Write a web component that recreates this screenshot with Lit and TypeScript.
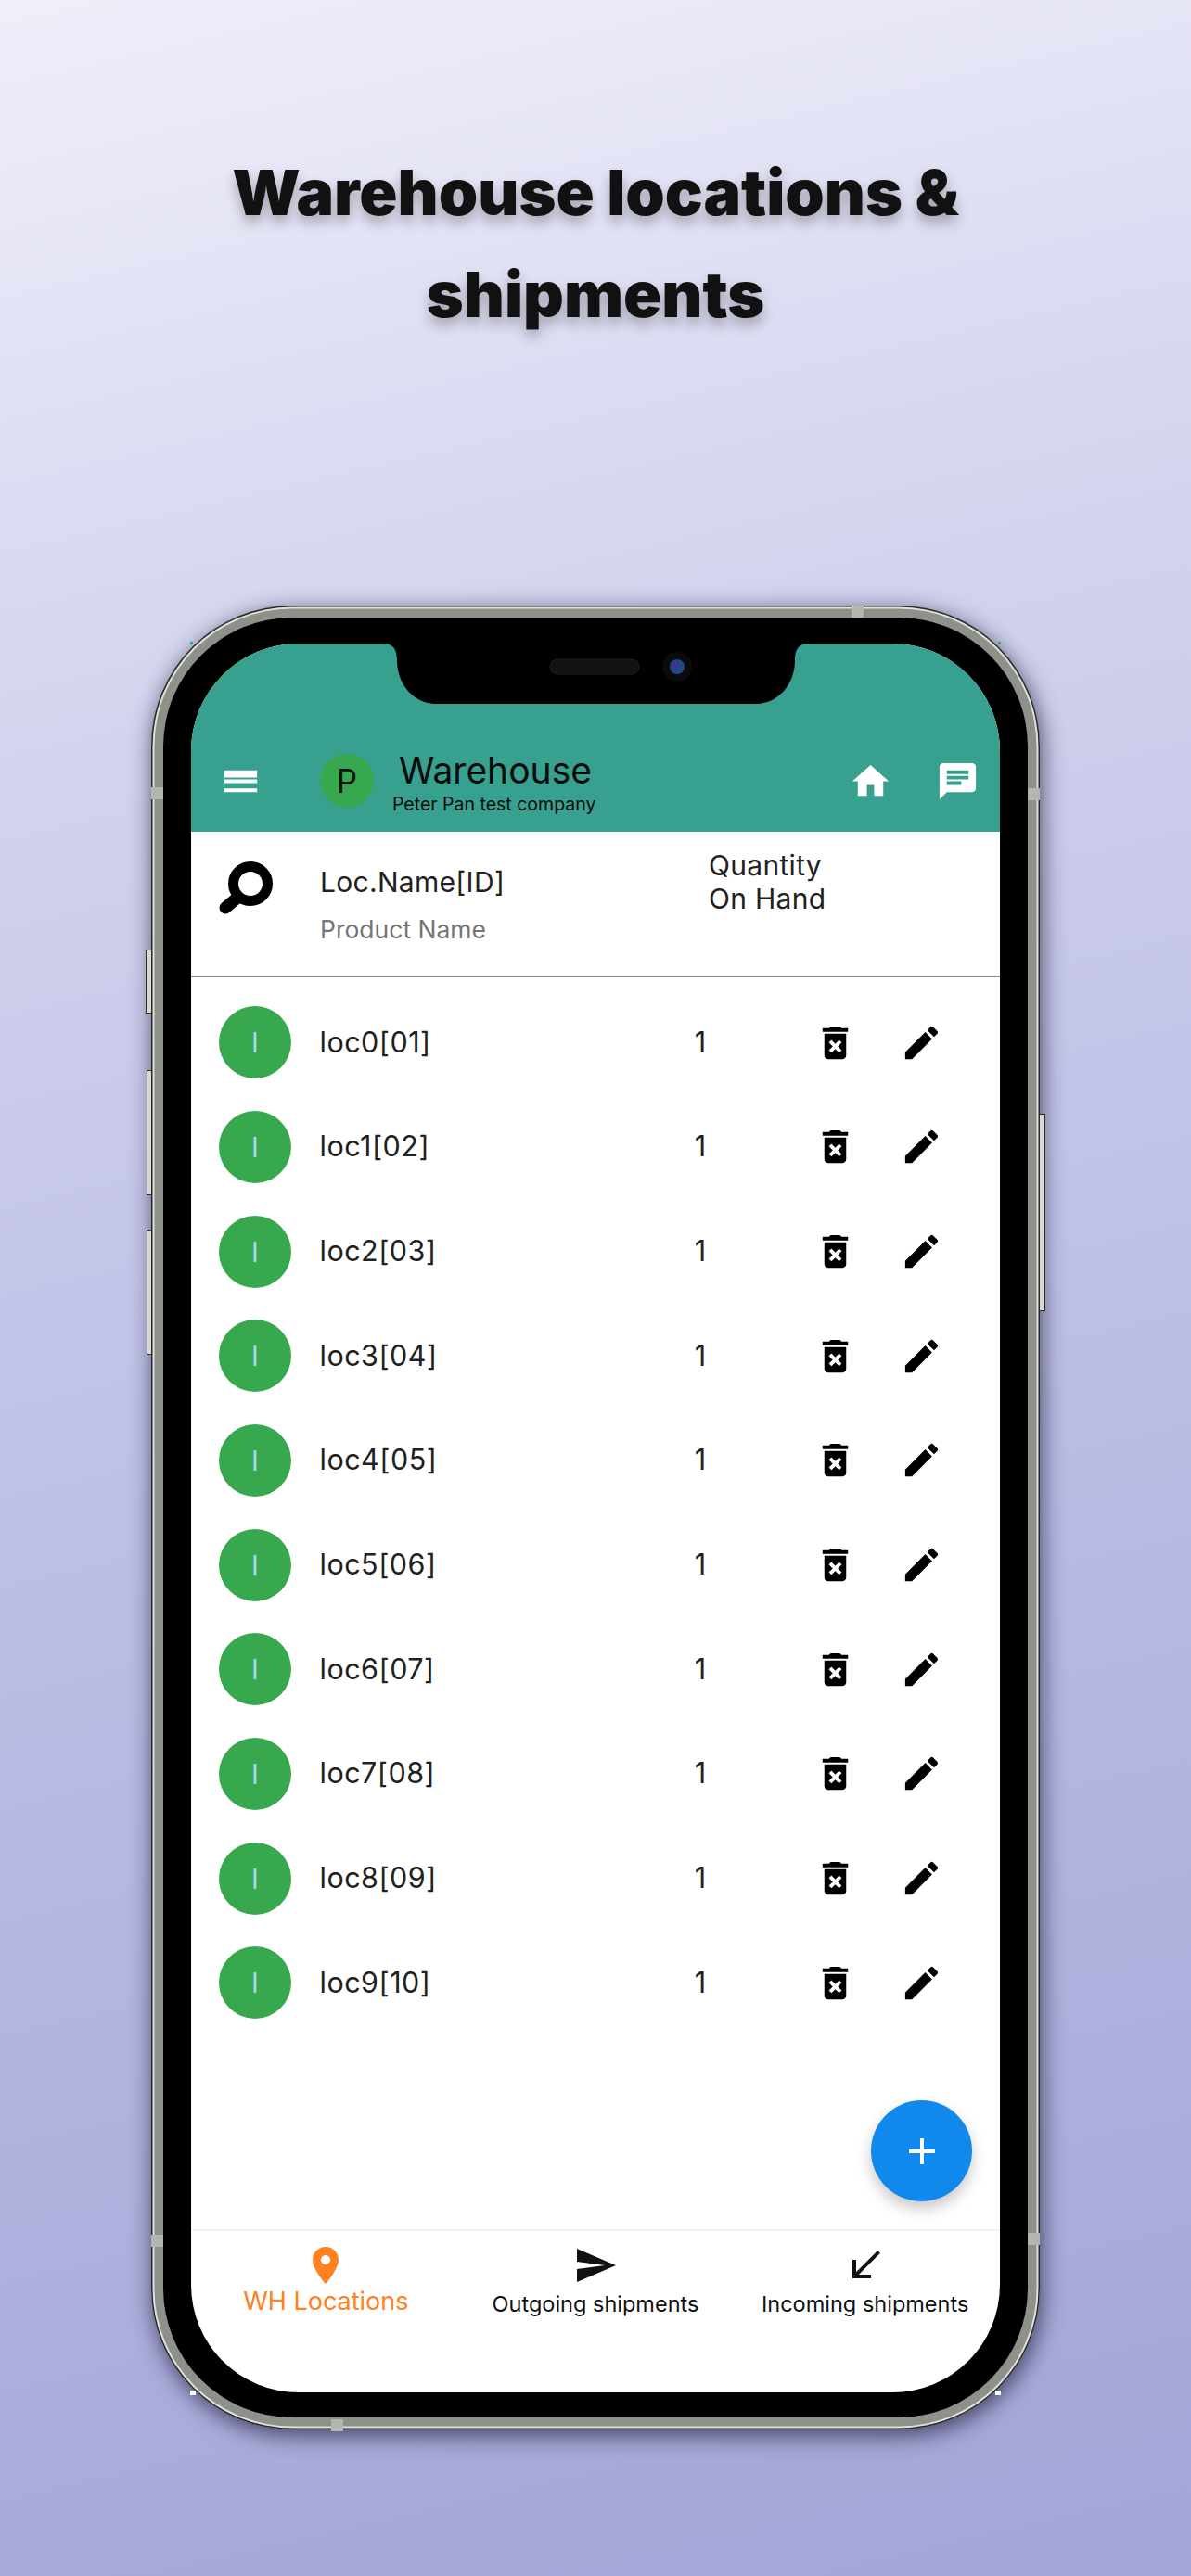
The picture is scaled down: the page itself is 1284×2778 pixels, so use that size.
import { LitElement, html, css, svg } from "lit";
import { customElement } from "lit/decorators.js";

const ICONS = {
  menu: "M3 18h18v-2H3v2zm0-5h18v-2H3v2zm0-5v2h18V6H3z",
  home: "M10 20v-6h4v6h5v-8h3L12 3 2 12h3v8z",
  chat: "M20 2H4c-1.1 0-1.99.9-1.99 2L2 22l4-4h14c1.1 0 2-.9 2-2V4c0-1.1-.9-2-2-2zM6 9h12v2H6V9zm8 5H6v-2h8v2zm4-6H6V6h12v2z",
  trash:
    "M6 19c0 1.1.9 2 2 2h8c1.1 0 2-.9 2-2V7H6v12zm2.46-7.12l1.41-1.41L12 12.59l2.12-2.12 1.41 1.41L13.41 14l2.12 2.12-1.41 1.41L12 15.41l-2.12 2.12-1.41-1.41L10.59 14l-2.13-2.12zM15.5 4l-1-1h-5l-1 1H5v2h14V4z",
  edit: "M3 17.25V21h3.75L17.81 9.94l-3.75-3.75L3 17.25zM20.71 7.04c.39-.39.39-1.02 0-1.41l-2.34-2.34c-.39-.39-1.02-.39-1.41 0l-1.83 1.83 3.75 3.75 1.83-1.83z",
  add: "M19 13h-6v6h-2v-6H5v-2h6V5h2v6h6v2z",
  place:
    "M12 2C8.13 2 5 5.13 5 9c0 5.25 7 13 7 13s7-7.75 7-13c0-3.87-3.13-7-7-7zm0 9.5c-1.38 0-2.5-1.12-2.5-2.5s1.12-2.5 2.5-2.5 2.5 1.12 2.5 2.5-1.12 2.5-2.5 2.5z",
  send: "M2.01 21L23 12 2.01 3 2 10l15 2-15 2z",
  received: "M20 5.41L18.59 4 7 15.59V9H5v10h10v-2H8.41z",
};

const icon = (d: string, cls: string) =>
  html`<svg class=${cls} viewBox="0 0 24 24" fill="currentColor">${svg`<path d=${d}></path>`}</svg>`;

const LOCATIONS = Array.from({ length: 10 }, (_, i) => ({
  name: `loc${i}[${String(i + 1).padStart(2, "0")}]`,
  qty: 1,
}));

// antenna bands on the steel frame, [left, top] inside the phone
const BANDS = [
  [755, 0],
  [0, 196],
  [945, 197],
  [0, 1757],
  [945, 1755],
  [194, 1956],
];

@customElement("app-root")
export class AppRoot extends LitElement {
  static styles = css`
    :host {
      display: block;
      width: 1284px;
      height: 2778px;
      overflow: hidden;
      background: linear-gradient(167deg, #efeffa 0%, #d2d3ee 27%, #bcbee5 56%, #a2a5d6 100%);
      font-family: Inter, "Liberation Sans", sans-serif;
      color: #212121;
    }
    .title {
      margin: 0;
      padding: 152px 0 0;
      height: 653px;
      box-sizing: border-box;
      text-align: center;
      font-family: Inter, "Liberation Sans", sans-serif;
      font-size: 68px;
      font-weight: 900;
      line-height: 110px;
      color: #111;
      text-shadow: 0 8px 14px rgba(0, 0, 0, 0.28);
    }

    .phone {
      position: relative;
      box-sizing: border-box;
      width: 958px;
      height: 1967px;
      margin-left: 163px;
      padding: 41px 43px 40px;
      border-radius: 152px;
      background: #000;
      box-shadow:
        inset 0 0 0 1.5px #26282a,
        inset 0 0 0 3.5px #dfe1da,
        inset 0 0 0 13px #8e9189,
        2px 6px 24px rgba(20, 20, 50, 0.7);
    }
    .band {
      position: absolute;
      width: 13px;
      height: 13px;
      background: #b3b5af;
    }
    .side {
      position: absolute;
      box-sizing: border-box;
      width: 6px;
      background: #d9dad3;
      border: 1px solid #2a2a2a;
      border-right: none;
    }
    .side.right {
      border: 1px solid #2a2a2a;
      border-left: none;
    }
    .speck {
      position: absolute;
      width: 3px;
      height: 3px;
      background: #37a08f;
    }
    .speck.low {
      width: 6px;
      height: 5px;
      background: #fff;
    }
    .screen {
      position: relative;
      display: flex;
      flex-direction: column;
      height: 100%;
      overflow: hidden;
      border-radius: 116px;
      background: #fff;
    }
    .notch {
      position: absolute;
      left: 206px;
      top: 0;
      width: 461px;
      height: 65px;
    }

    .appbar {
      flex: none;
      display: flex;
      align-items: flex-start;
      box-sizing: border-box;
      height: 203px;
      padding: 125px 0 0 30px;
      background: #37a08f;
      color: #fff;
    }
    .appbar svg {
      flex: none;
      width: 47px;
      height: 47px;
    }
    .menu {
      margin-right: 62px;
    }
    .logo {
      flex: none;
      display: flex;
      align-items: center;
      justify-content: center;
      width: 58px;
      height: 58px;
      margin: -6px 0 0 0;
      border-radius: 50%;
      background: #37a84e;
      color: #111;
      font-size: 35px;
    }
    .brand {
      flex: none;
      width: 483px;
      margin: -10px 9px 0 20px;
      color: #0a0a0a;
    }
    .brand b {
      display: block;
      margin-left: 7px;
      font-size: 39px;
      font-weight: 400;
      line-height: 44px;
    }
    .brand small {
      display: block;
      margin-top: 3px;
      font-size: 19.5px;
      line-height: 22px;
    }
    .home {
      margin-right: 47px;
    }

    .head {
      flex: none;
      display: flex;
      box-sizing: border-box;
      height: 155px;
      padding-left: 30px;
    }
    .glass {
      flex: none;
      width: 58px;
      height: 58px;
      margin: 31px 52px 0 0;
    }
    .names {
      flex: none;
      width: 420px;
      margin-left: -1px;
      padding-top: 34px;
    }
    .names div {
      font-size: 30px;
      letter-spacing: 0.3px;
      line-height: 40px;
    }
    .names small {
      display: block;
      margin-top: 15px;
      color: #757575;
      font-size: 26.5px;
      line-height: 32px;
    }
    .qty-head {
      margin-left: -1px;
      padding-top: 18px;
      font-size: 30px;
      letter-spacing: 0.3px;
      line-height: 36px;
    }
    .divider {
      flex: none;
      height: 2px;
      background: #909090;
    }

    .list {
      flex: 1;
      position: relative;
      padding-top: 14px;
    }
    .row {
      display: flex;
      align-items: center;
      height: 112.67px;
      padding-left: 30px;
      font-size: 30.5px;
    }
    .avatar {
      flex: none;
      display: flex;
      align-items: center;
      justify-content: center;
      width: 78px;
      height: 78px;
      margin-right: 30.5px;
      border-radius: 50%;
      background: #37a84e;
      color: #a9d8f0;
      font-size: 30px;
    }
    .name {
      flex: none;
      width: 375.5px;
      margin-top: -2px;
      letter-spacing: 0.5px;
    }
    .qty {
      flex: none;
      width: 70px;
      margin-top: -2px;
      text-align: center;
    }
    .row svg {
      flex: none;
      width: 47px;
      height: 47px;
      color: #000;
    }
    .trash {
      margin: 0 46.5px 0 86.5px;
    }

    .fab {
      position: absolute;
      right: 30px;
      bottom: 30px;
      display: flex;
      align-items: center;
      justify-content: center;
      width: 109px;
      height: 109px;
      border-radius: 50%;
      background: #1088ec;
      color: #fff;
      box-shadow: 0 8px 16px rgba(0, 0, 0, 0.22);
    }
    .fab svg {
      width: 48px;
      height: 48px;
    }

    .nav {
      flex: none;
      display: grid;
      grid-template-columns: repeat(3, 1fr);
      box-sizing: border-box;
      height: 176px;
      border-top: 2px solid #f2f2f2;
    }
    .tab {
      display: flex;
      flex-direction: column;
      align-items: center;
      padding-top: 13px;
      color: #111;
      font-size: 23.5px;
      line-height: 30px;
    }
    .tab svg {
      width: 48px;
      height: 48px;
      margin-bottom: 3px;
    }
    .tab.active {
      color: #ff8120;
      font-size: 27px;
    }
    .tab.active svg {
      margin-bottom: 0;
    }
  `;

  render() {
    return html`
      <h1 class="title">Warehouse locations &amp;<br />shipments</h1>
      <div class="phone">
        ${BANDS.map(([x, y]) => html`<span class="band" style="left:${x}px;top:${y}px"></span>`)}
        <span class="side" style="left:-6px;top:371px;height:69px"></span>
        <span class="side" style="left:-5px;top:501px;height:135px;width:5px"></span>
        <span class="side" style="left:-5px;top:673px;height:135px;width:5px"></span>
        <span class="side right" style="right:-6px;top:548px;height:213px"></span>
        <div class="screen">
          <div class="appbar">
            ${icon(ICONS.menu, "menu")}
            <div class="logo">P</div>
            <div class="brand">
              <b>Warehouse</b>
              <small>Peter Pan test company</small>
            </div>
            ${icon(ICONS.home, "home")} ${icon(ICONS.chat, "chat")}
          </div>
          <div class="head">
            <svg class="glass" viewBox="0 0 58 58">
              <circle cx="34" cy="25" r="18.5" fill="none" stroke="#000" stroke-width="11"></circle>
              <path d="M20 40L7 51" stroke="#000" stroke-width="13" stroke-linecap="round"></path>
            </svg>
            <div class="names">
              <div>Loc.Name[ID]</div>
              <small>Product Name</small>
            </div>
            <div class="qty-head">Quantity<br />On Hand</div>
          </div>
          <div class="divider"></div>
          <div class="list">
            ${LOCATIONS.map(
              (l) => html`
                <div class="row">
                  <div class="avatar">l</div>
                  <div class="name">${l.name}</div>
                  <div class="qty">${l.qty}</div>
                  ${icon(ICONS.trash, "trash")} ${icon(ICONS.edit, "edit")}
                </div>
              `
            )}
            <div class="fab">${icon(ICONS.add, "")}</div>
          </div>
          <div class="nav">
            <div class="tab active">${icon(ICONS.place, "")}WH Locations</div>
            <div class="tab">${icon(ICONS.send, "")}Outgoing shipments</div>
            <div class="tab">${icon(ICONS.received, "")}Incoming shipments</div>
          </div>
          <svg class="notch" viewBox="0 0 461 65">
            <path
              d="M0 0H461C451 0 445 4 445 18C445 45 426 65 403 65H58C35 65 16 45 16 18C16 4 10 0 0 0Z"
              fill="#000"
            ></path>
            <rect x="181" y="17" width="96" height="16" rx="8" fill="#121212" stroke="#1e1e1e"></rect>
            <circle cx="318" cy="25" r="16" fill="#0b0b0e"></circle>
            <circle cx="318" cy="25" r="8" fill="#1d4a86"></circle>
            <circle cx="316" cy="24" r="3" fill="#4a2f96"></circle>
          </svg>
        </div>
        <span class="speck" style="left:42px;top:39px"></span>
        <span class="speck" style="right:42px;top:39px"></span>
        <span class="speck low" style="left:42px;bottom:37px"></span>
        <span class="speck low" style="right:42px;bottom:37px"></span>
      </div>
    `;
  }
}
